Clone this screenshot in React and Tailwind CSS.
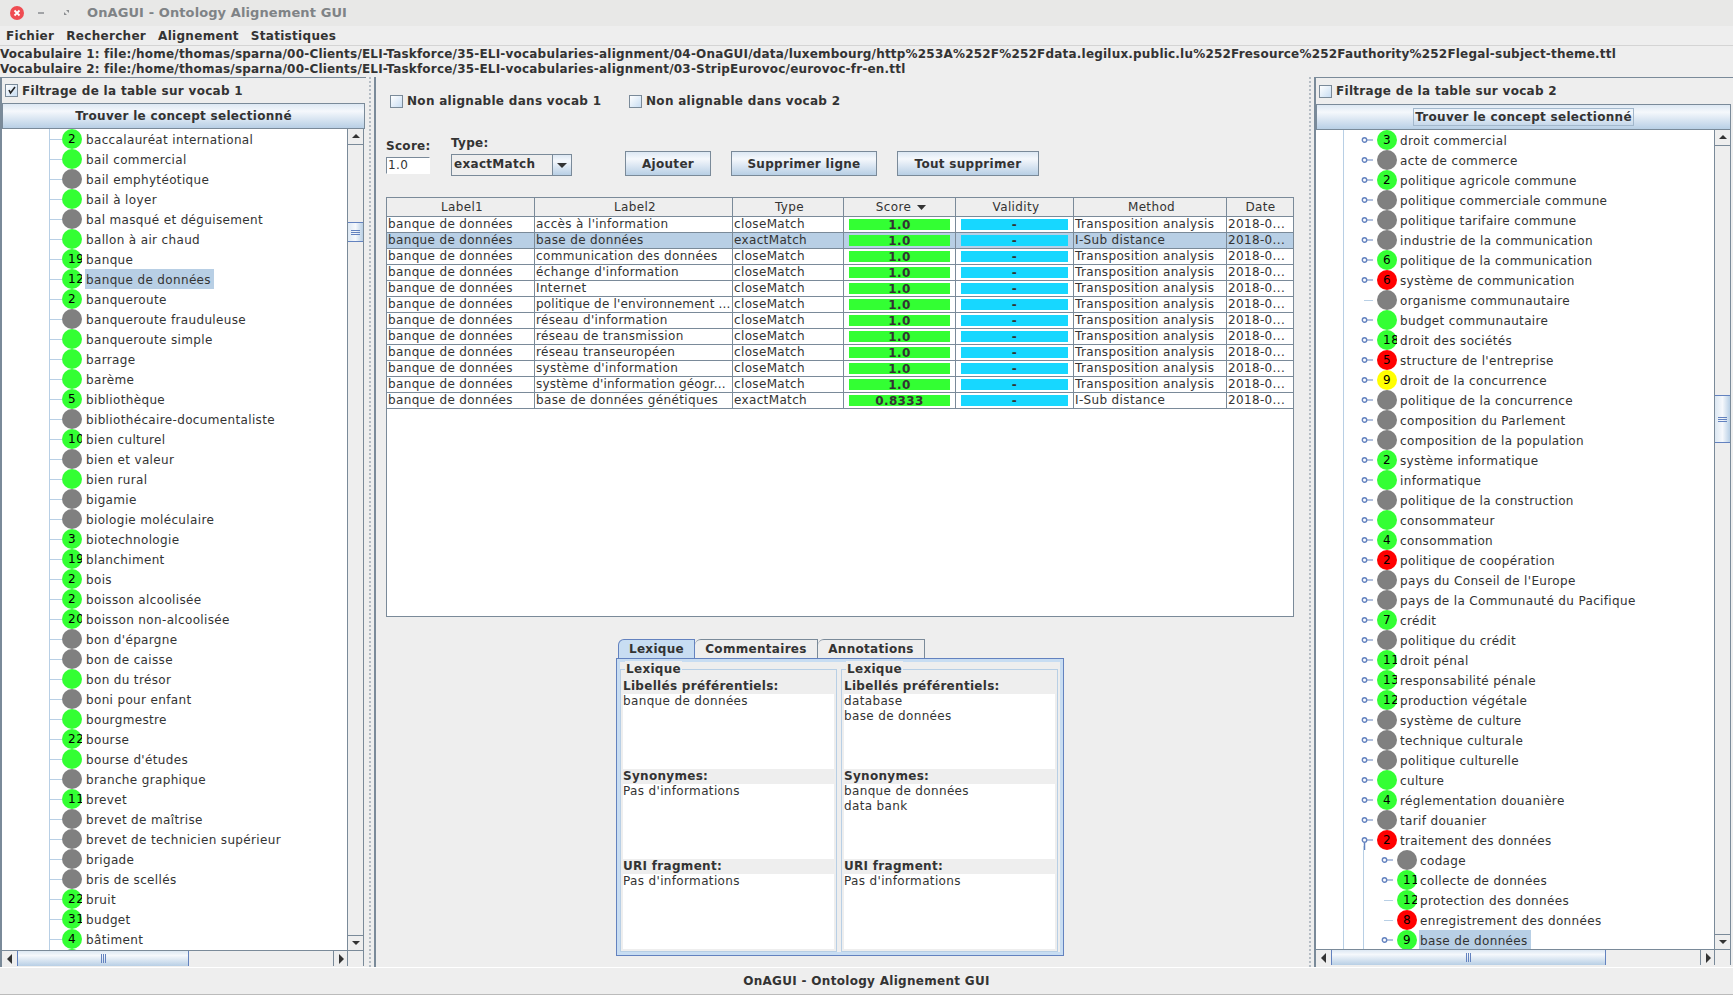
import React from 'react';

const LINE = 'border-[#7a8a99]';
const METAL = 'bg-gradient-to-b from-[#dde8f3] via-[#f5f8fc] via-30% to-[#b8cfe5]';
const BOLD = 'font-bold tracking-[0.3px]';

const dot = { g: 'bg-[#33ff33]', n: 'bg-[#808080]', r: 'bg-[#ff0000]', y: 'bg-[#ffff00]' };

const leftRows = [
  ['2', 'g', 'baccalauréat international'], ['', 'g', 'bail commercial'], ['', 'n', 'bail emphytéotique'],
  ['', 'g', 'bail à loyer'], ['', 'n', 'bal masqué et déguisement'], ['', 'g', 'ballon à air chaud'],
  ['19', 'g', 'banque'], ['12', 'g', 'banque de données', true], ['2', 'g', 'banqueroute'],
  ['', 'n', 'banqueroute frauduleuse'], ['', 'g', 'banqueroute simple'], ['', 'g', 'barrage'],
  ['', 'g', 'barème'], ['5', 'g', 'bibliothèque'], ['', 'n', 'bibliothécaire-documentaliste'],
  ['10', 'g', 'bien culturel'], ['', 'n', 'bien et valeur'], ['', 'g', 'bien rural'],
  ['', 'n', 'bigamie'], ['', 'n', 'biologie moléculaire'], ['3', 'g', 'biotechnologie'],
  ['19', 'g', 'blanchiment'], ['2', 'g', 'bois'], ['2', 'g', 'boisson alcoolisée'],
  ['20', 'g', 'boisson non-alcoolisée'], ['', 'n', "bon d'épargne"], ['', 'n', 'bon de caisse'],
  ['', 'g', 'bon du trésor'], ['', 'n', 'boni pour enfant'], ['', 'g', 'bourgmestre'],
  ['22', 'g', 'bourse'], ['', 'g', "bourse d'études"], ['', 'n', 'branche graphique'],
  ['11', 'g', 'brevet'], ['', 'n', 'brevet de maîtrise'], ['', 'n', 'brevet de technicien supérieur'],
  ['', 'n', 'brigade'], ['', 'n', 'bris de scellés'], ['22', 'g', 'bruit'],
  ['31', 'g', 'budget'], ['4', 'g', 'bâtiment'], ['', 'g', ''],
];

// count, colour, label, expander (o open / l leaf / c closed), depth, selected
const rightRows = [
  ['3', 'g', 'droit commercial'], ['', 'n', 'acte de commerce'], ['2', 'g', 'politique agricole commune'],
  ['', 'n', 'politique commerciale commune'], ['', 'n', 'politique tarifaire commune'],
  ['', 'n', 'industrie de la communication'], ['6', 'g', 'politique de la communication'],
  ['6', 'r', 'système de communication'], ['', 'n', 'organisme communautaire', 'l'],
  ['', 'g', 'budget communautaire'], ['18', 'g', 'droit des sociétés'], ['5', 'r', "structure de l'entreprise"],
  ['9', 'y', 'droit de la concurrence'], ['', 'n', 'politique de la concurrence'],
  ['', 'n', 'composition du Parlement'], ['', 'n', 'composition de la population'],
  ['2', 'g', 'système informatique'], ['', 'g', 'informatique'], ['', 'n', 'politique de la construction'],
  ['', 'g', 'consommateur'], ['4', 'g', 'consommation'], ['2', 'r', 'politique de coopération'],
  ['', 'n', "pays du Conseil de l'Europe"], ['', 'n', 'pays de la Communauté du Pacifique'],
  ['7', 'g', 'crédit'], ['', 'n', 'politique du crédit'], ['11', 'g', 'droit pénal'],
  ['13', 'g', 'responsabilité pénale'], ['12', 'g', 'production végétale'], ['', 'n', 'système de culture'],
  ['', 'n', 'technique culturale'], ['', 'n', 'politique culturelle'], ['', 'g', 'culture'],
  ['4', 'g', 'réglementation douanière'], ['', 'n', 'tarif douanier'], ['2', 'r', 'traitement des données', 'o'],
  ['', 'n', 'codage', 'c', 2], ['11', 'g', 'collecte de données', 'c', 2],
  ['12', 'g', 'protection des données', 'l', 2], ['8', 'r', 'enregistrement des données', 'l', 2],
  ['9', 'g', 'base de données', 'c', 2, true],
];

const tableRows = [
  ["accès à l'information", 'closeMatch', '1.0', 'Transposition analysis'],
  ['base de données', 'exactMatch', '1.0', 'I-Sub distance', true],
  ['communication des données', 'closeMatch', '1.0', 'Transposition analysis'],
  ["échange d'information", 'closeMatch', '1.0', 'Transposition analysis'],
  ['Internet', 'closeMatch', '1.0', 'Transposition analysis'],
  ["politique de l'environnement ...", 'closeMatch', '1.0', 'Transposition analysis'],
  ["réseau d'information", 'closeMatch', '1.0', 'Transposition analysis'],
  ['réseau de transmission', 'closeMatch', '1.0', 'Transposition analysis'],
  ['réseau transeuropéen', 'closeMatch', '1.0', 'Transposition analysis'],
  ["système d'information", 'closeMatch', '1.0', 'Transposition analysis'],
  ["système d'information géogr...", 'closeMatch', '1.0', 'Transposition analysis'],
  ['base de données génétiques', 'exactMatch', '0.8333', 'I-Sub distance'],
];

const Arrow = ({ dir }) => {
  const pts = { up: '1,6 9,6 5,2', down: '1,3 9,3 5,7', left: '7,0 7,10 2,5', right: '3,0 3,10 8,5' };
  return (
    <svg width="10" height="10" viewBox="0 0 10 10">
      <polygon points={pts[dir]} fill="#333333" />
    </svg>
  );
};

const VScroll = ({ thumb, down = 'h-[15px]' }) => (
  <div className={`flex w-[16px] shrink-0 flex-col border-l bg-[#eeeeee] ${LINE}`}>
    <div className={`flex h-[16px] items-center justify-center border-b ${LINE}`}><Arrow dir="up" /></div>
    <div className="flex-1">
      <div className={`flex flex-col items-center justify-center gap-[1px] border-y border-[#6382bf] bg-gradient-to-r from-[#dde8f3] via-[#f5f8fc] to-[#b8cfe5] ${thumb}`}>
        <div className="h-[1px] w-[9px] bg-[#6382bf]" />
        <div className="h-[1px] w-[9px] bg-[#6382bf]" />
        <div className="h-[1px] w-[9px] bg-[#6382bf]" />
      </div>
    </div>
    <div className={`flex items-center justify-center border-t ${LINE} ${down}`}><Arrow dir="down" /></div>
  </div>
);

const HScroll = ({ thumb }) => (
  <div className={`flex h-[16px] shrink-0 border-t bg-[#eeeeee] ${LINE}`}>
    <div className="flex w-[15px] items-center justify-center"><Arrow dir="left" /></div>
    <div className="flex-1">
      <div className={`flex h-full items-center justify-center gap-[1px] border-x border-[#6382bf] ${METAL} ${thumb}`}>
        <div className="h-[9px] w-[1px] bg-[#6382bf]" />
        <div className="h-[9px] w-[1px] bg-[#6382bf]" />
        <div className="h-[9px] w-[1px] bg-[#6382bf]" />
      </div>
    </div>
    <div className={`flex w-[15px] items-center justify-center border-x ${LINE}`}><Arrow dir="right" /></div>
    <div className="w-[15px]" />
  </div>
);

const Checkbox = ({ checked }) => (
  <div className={`flex h-[13px] w-[13px] shrink-0 items-center justify-center border ${LINE} bg-gradient-to-br from-[#ffffff] to-[#c8ddf2]`}>
    {checked && (
      <svg width="9" height="9" viewBox="0 0 9 9">
        <path d="M2 4 L3.5 7 L8 1" fill="none" stroke="#222222" strokeWidth="1.6" />
      </svg>
    )}
  </div>
);

const Badge = ({ count, color }) => (
  <div className={`h-[20px] w-[20px] shrink-0 rounded-full ${dot[color]}`}>
    <div className="h-[20px] w-[20px] overflow-hidden whitespace-nowrap pl-[6px] text-[12px] leading-[20px] tracking-[0.7px] text-black">{count}</div>
  </div>
);

const Label = ({ text, selected }) => (
  <div className={`ml-[3px] h-[20px] whitespace-nowrap pl-[1px] pr-[3px] leading-[22px] ${selected ? 'bg-[#b8cfe5]' : ''}`}>{text}</div>
);

const Expander = ({ kind }) => (
  <svg width="16" height="20" viewBox="0 0 16 20" className="shrink-0">
    {kind !== 'l' && <line x1="6" y1="10" x2="12" y2="10" stroke="#6382bf" />}
    {kind === 'l' && <line x1="3" y1="10.5" x2="12" y2="10.5" stroke="#b8cfe5" />}
    {kind === 'o' && <line x1="3.5" y1="13" x2="3.5" y2="20" stroke="#6382bf" strokeWidth="1.5" />}
    {kind !== 'l' && <circle cx="3.5" cy="10" r="2.2" fill="#ffffff" stroke="#6382bf" strokeWidth="1.4" />}
  </svg>
);

const FilterRow = ({ h, checked, children }) => (
  <div className={`flex shrink-0 items-center gap-[4px] pl-[3px] ${BOLD} ${h}`}>
    <Checkbox checked={checked} />
    <span>{children}</span>
  </div>
);

const LeftPanel = () => (
  <div className={`flex w-[366px] shrink-0 flex-col border-t border-l-2 pb-[1px] pr-[1px] ${LINE}`}>
    <FilterRow h="h-[25px]" checked>Filtrage de la table sur vocab 1</FilterRow>
    <div className={`flex h-[26px] shrink-0 items-center justify-center border ${LINE} ${METAL} ${BOLD}`}>Trouver le concept selectionné</div>
    <div className={`mr-[1px] flex min-h-0 flex-1 flex-col border-r ${LINE}`}>
      <div className="flex min-h-0 flex-1">
        <div className="relative flex-1 overflow-hidden bg-white">
          <div className="absolute bottom-0 left-[47px] top-0 w-[1px] bg-[#b8cfe5]" />
          {leftRows.map(([count, color, text, sel], i) => (
            <div key={i} className="flex h-[20px] items-center pl-[48px]">
              <div className="h-[1px] w-[12px] bg-[#b8cfe5]" />
              <Badge count={count} color={color} />
              <Label text={text} selected={sel} />
            </div>
          ))}
        </div>
        <VScroll thumb="mt-[77px] h-[20px]" />
      </div>
      <HScroll thumb="w-[172px]" />
    </div>
  </div>
);

const RightPanel = () => (
  <div className={`flex w-[419px] shrink-0 flex-col border-t border-l-2 pb-[2px] pr-[2px] ${LINE}`}>
    <FilterRow h="h-[26px]">Filtrage de la table sur vocab 2</FilterRow>
    <div className={`flex h-[26px] shrink-0 items-center justify-center border ${LINE} ${METAL} ${BOLD}`}>
      <span className="border border-[#a3b8cc] px-[1px] leading-[16px]">Trouver le concept selectionné</span>
    </div>
    <div className={`flex min-h-0 flex-1 flex-col border-r ${LINE}`}>
      <div className="flex min-h-0 flex-1">
        <div className="relative flex-1 overflow-hidden bg-white">
          <div className="absolute bottom-0 left-[27px] top-0 w-[1px] bg-[#b8cfe5]" />
          <div className="absolute bottom-0 left-[47px] top-[716px] w-[1px] bg-[#b8cfe5]" />
          {rightRows.map(([count, color, text, kind = 'c', depth = 1, sel], i) => (
            <div key={i} className={`flex h-[20px] items-center ${depth === 2 ? 'pl-[65px]' : 'pl-[45px]'}`}>
              <Expander kind={kind} />
              <Badge count={count} color={color} />
              <div className="-ml-[1px]"><Label text={text} selected={sel} /></div>
            </div>
          ))}
        </div>
        <VScroll thumb="mt-[249px] h-[48px]" />
      </div>
      <HScroll thumb="w-[275px]" />
    </div>
  </div>
);

const Divider = () => (
  <div className="flex w-[8px] shrink-0 justify-center">
    <div className="w-0 border-l-2 border-dotted border-[#b4bcc4]" />
  </div>
);

const Head = ({ children, last }) => (
  <div className={`flex items-center justify-center gap-[6px] border-b ${last ? '' : 'border-r pl-[3px]'} ${LINE}`}>{children}</div>
);

const Cell = ({ children, last, tight }) => (
  <div className={`overflow-hidden whitespace-nowrap border-b pl-[1px] leading-[15px] ${last ? '' : 'border-r'} ${tight ? 'tracking-[0.2px]' : ''} ${LINE}`}>{children}</div>
);

const COLS = 'grid grid-cols-[148px_198px_111px_112px_118px_153px_67px]';

const AlignTable = () => (
  <div className={`ml-[10px] mt-[21px] h-[420px] w-[908px] border ${LINE} bg-white`}>
    <div className={`${COLS} h-[19px] bg-[#eeeeee]`}>
      <Head>Label1</Head>
      <Head>Label2</Head>
      <Head>Type</Head>
      <Head>
        Score
        <svg width="9" height="5" viewBox="0 0 9 5"><polygon points="0,0 9,0 4.5,5" fill="#333333" /></svg>
      </Head>
      <Head>Validity</Head>
      <Head>Method</Head>
      <Head last>Date</Head>
    </div>
    {tableRows.map(([label2, type, score, method, sel], i) => (
      <div key={i} className={`${COLS} h-[16px] ${sel ? 'bg-[#b8cfe5]' : ''}`}>
        <Cell>banque de données</Cell>
        <Cell tight={label2.endsWith('...')}>{label2}</Cell>
        <Cell>{type}</Cell>
        <div className={`border-b border-r px-[5px] ${LINE}`}><div className="mt-[2px] flex h-[11px] items-center justify-center bg-[#33ff33] font-bold">{score}</div></div>
        <div className={`border-b border-r px-[5px] ${LINE}`}><div className="mt-[2px] flex h-[11px] items-center justify-center bg-[#17d7ff] font-bold">-</div></div>
        <Cell>{method}</Cell>
        <Cell last>2018-0...</Cell>
      </div>
    ))}
  </div>
);

const Section = ({ title, lines }) => (
  <div>
    <div className={`h-[15px] leading-[15px] ${BOLD}`}>{title}</div>
    <div className="h-[75px] bg-white leading-[15px]">
      {lines.map((l) => <div key={l}>{l}</div>)}
    </div>
  </div>
);

const LexGroup = ({ pref, syn }) => (
  <div className="relative h-[283px] w-[217px] border border-[#b8cfe5] px-[2px] pt-[9px]">
    <span className={`absolute -top-[9px] left-[4px] bg-[#eeeeee] px-[1px] leading-[16px] ${BOLD}`}>Lexique</span>
    <Section title="Libellés préférentiels:" lines={pref} />
    <Section title="Synonymes:" lines={syn} />
    <Section title="URI fragment:" lines={["Pas d'informations"]} />
  </div>
);

const Tabs = () => (
  <div className="ml-[240px] mt-[22px] w-[448px]">
    <div className="flex h-[19px] pl-[2px]">
      <div className={`flex w-[77px] items-center justify-center rounded-tl-[6px] border border-b-0 border-[#6382bf] bg-[#c8ddf2] ${BOLD}`}>Lexique</div>
      <div className={`flex w-[123px] items-center justify-center rounded-tl-[6px] border border-b-0 border-l-0 ${LINE} ${BOLD}`}>Commentaires</div>
      <div className={`flex w-[107px] items-center justify-center rounded-tl-[6px] border border-b-0 border-l-0 ${LINE} ${BOLD}`}>Annotations</div>
    </div>
    <div className="flex h-[298px] gap-[4px] border border-[#6382bf] bg-[#eeeeee] px-[3px] pb-[3px] pt-[10px] shadow-[inset_0_0_0_3px_#c8ddf2]">
      <LexGroup pref={['banque de données']} syn={["Pas d'informations"]} />
      <LexGroup pref={['database', 'base de données']} syn={['banque de données', 'data bank']} />
    </div>
  </div>
);

const Button = ({ w, ml, children }) => (
  <div className={`flex h-[25px] items-center justify-center border ${LINE} ${METAL} ${BOLD} ${w} ${ml}`}>{children}</div>
);

const Center = () => (
  <div className={`w-[932px] shrink-0 border-l-2 ${LINE}`}>
    <div className={`flex items-center pl-[14px] pt-[15px] ${BOLD}`}>
      <Checkbox />
      <span className="ml-[4px] w-[222px]">Non alignable dans vocab 1</span>
      <Checkbox />
      <span className="ml-[4px]">Non alignable dans vocab 2</span>
    </div>
    <div className="ml-[10px] mt-[26px] flex h-[40px] items-end">
      <div className="mb-[2px] w-[65px]">
        <div className={`mb-[3px] leading-[15px] ${BOLD}`}>Score:</div>
        <div className={`h-[17px] w-[44px] border border-b-white border-r-white ${LINE} bg-white pl-[1px] leading-[15px]`}>1.0</div>
      </div>
      <div className="w-[174px]">
        <div className={`mb-[3px] leading-[15px] ${BOLD}`}>Type:</div>
        <div className={`flex h-[22px] w-[121px] border ${LINE}`}>
          <div className={`flex-1 pl-[2px] leading-[19px] ${BOLD}`}>exactMatch</div>
          <div className={`flex w-[19px] items-center justify-center border-l ${LINE} ${METAL}`}>
            <svg width="10" height="5" viewBox="0 0 10 5"><polygon points="0,0 10,0 5,5" fill="#333333" /></svg>
          </div>
        </div>
      </div>
      <Button w="w-[86px]">Ajouter</Button>
      <Button w="w-[146px]" ml="ml-[20px]">Supprimer ligne</Button>
      <Button w="w-[142px]" ml="ml-[20px]">Tout supprimer</Button>
    </div>
    <AlignTable />
    <Tabs />
  </div>
);

export default function App() {
  return (
    <div className="flex h-[995px] w-[1733px] flex-col overflow-hidden bg-[#eeeeee] font-['DejaVu_Sans',sans-serif] text-[12px] tracking-[0.35px] text-[#333333]">
      <div className="flex h-[26px] shrink-0 items-center bg-[#e8e8e7]">
        <svg width="70" height="24" viewBox="0 0 70 24" className="ml-[10px] shrink-0">
          <circle cx="7" cy="12" r="7" fill="#ef4c52" />
          <path d="M4.5 9.5 L9.5 14.5 M9.5 9.5 L4.5 14.5" stroke="#ffffff" strokeWidth="1.8" />
          <line x1="28" y1="12" x2="34" y2="12" stroke="#8a8d90" strokeWidth="1.5" />
          <path d="M54 14 L54 11 L57 14 Z M59 9 L56 9 L59 12 Z" fill="#8a8d90" />
        </svg>
        <span className="ml-[7px] text-[13px] font-bold tracking-[0.1px] text-[#7f8386]">OnAGUI - Ontology Alignement GUI</span>
      </div>
      <div className={`flex h-[20px] shrink-0 items-center gap-[12px] border-b border-[#d4d4d4] pl-[6px] ${BOLD}`}>
        <span>Fichier</span>
        <span>Rechercher</span>
        <span>Alignement</span>
        <span>Statistiques</span>
      </div>
      <div className="h-[31px] shrink-0 whitespace-nowrap pt-[1px] font-bold leading-[15px] tracking-[0.2px]">
        <div>Vocabulaire 1: file:/home/thomas/sparna/00-Clients/ELI-Taskforce/35-ELI-vocabularies-alignment/04-OnaGUI/data/luxembourg/http%253A%252F%252Fdata.legilux.public.lu%252Fresource%252Fauthority%252Flegal-subject-theme.ttl</div>
        <div>Vocabulaire 2: file:/home/thomas/sparna/00-Clients/ELI-Taskforce/35-ELI-vocabularies-alignment/03-StripEurovoc/eurovoc-fr-en.ttl</div>
      </div>
      <div className="flex h-[891px] shrink-0 border-b border-white">
        <LeftPanel />
        <Divider />
        <Center />
        <Divider />
        <RightPanel />
      </div>
      <div className={`flex flex-1 items-center justify-center border-b border-[#bbbbbb] ${BOLD}`}>OnAGUI - Ontology Alignement GUI</div>
    </div>
  );
}
